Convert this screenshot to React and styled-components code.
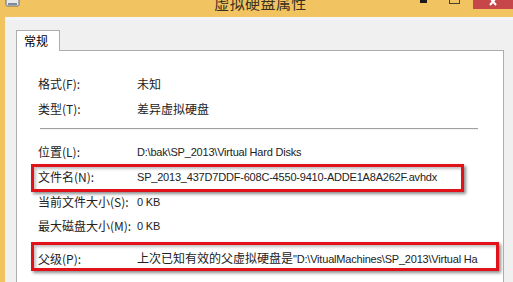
import React from "react";
import styled, { createGlobalStyle } from "styled-components";

const Global = createGlobalStyle`
  html, body { margin: 0; padding: 0; }
  body {
    width: 513px; height: 282px; overflow: hidden;
    background: #f0f0f0;
    font-family: "Liberation Sans", "Noto Sans CJK SC", sans-serif;
  }
`;

const Window = styled.div`
  width: 513px;
  height: 282px;
  display: flex;
  flex-direction: column;
  overflow: hidden;
  background: #f0c35f;
`;

const TitleBar = styled.div`
  position: relative;
  height: 17px;
  flex: none;
  display: flex;
  align-items: flex-end;
  justify-content: center;
  background: #f1c461;
  overflow: hidden;
`;

const Title = styled.div`
  font-family: "Noto Sans CJK SC", sans-serif;
  font-size: 15px;
  line-height: 15px;
  color: #3a3020;
  letter-spacing: 0.4px;
  margin-bottom: 7px;
  margin-left: 8px;
`;

const AppIcon = styled.svg`
  position: absolute;
  left: 5px;
  top: -6px;
`;

const Controls = styled.div`
  position: absolute;
  right: 0;
  top: 0;
  display: flex;
  align-items: flex-start;
`;

const CtlButton = styled.div`
  width: ${(p) => p.$w}px;
  height: 9px;
  display: flex;
  justify-content: center;
  background: ${(p) => (p.$close ? "#c7464a" : "transparent")};
`;

const MinGlyph = styled.div`
  width: 7px;
  height: 3px;
  background: #1a1a1a;
`;

const MaxGlyph = styled.div`
  width: 9px;
  height: 3px;
  border: 1px solid #4a4030;
  border-top: none;
`;

const Body = styled.div`
  flex: 1;
  display: flex;
  padding-left: 5px;
  min-height: 0;
`;

const Client = styled.div`
  flex: 1;
  display: flex;
  flex-direction: column;
  background: #f0f0f0;
  border-top: 3px solid #f3f5f9;
  padding: 10px 9px 0 11px;
  min-height: 0;
`;

const TabStrip = styled.div`
  display: flex;
  height: 20px;
  flex: none;
`;

const Tab = styled.div`
  width: 44px;
  height: 21px;
  box-sizing: border-box;
  border: 1px solid #adadad;
  border-bottom: none;
  background: #fff;
  font-family: "Noto Sans CJK SC", sans-serif;
  font-size: 12px;
  line-height: 12px;
  padding: 4px 0 0 7px;
  color: #000;
  position: relative;
  z-index: 1;
`;

const Panel = styled.div`
  flex: 1;
  background: #fff;
  border: 1px solid #adadad;
  border-bottom: none;
  padding: 21px 0 0 21px;
  min-height: 0;
  overflow: hidden;
`;

const Grid = styled.div`
  display: flex;
  flex-direction: column;
`;

const Row = styled.div`
  position: relative;
  display: grid;
  grid-template-columns: 99px 1fr;
  height: ${(p) => p.$h}px;
  align-items: ${(p) => (p.$bottom ? "end" : "center")};
  padding-bottom: ${(p) => (p.$bottom ? 4 : 0)}px;
  box-sizing: border-box;
`;

const Label = styled.div`
  font-family: "Noto Sans CJK SC", sans-serif;
  font-size: 12px;
  line-height: 14px;
  color: #222;
  white-space: nowrap;
`;

const Value = styled.div`
  font-family: "Liberation Sans", "Noto Sans CJK SC", sans-serif;
  font-size: 11px;
  line-height: 14px;
  letter-spacing: -0.2px;
  color: #222;
  white-space: nowrap;
`;

const CjkText = styled.span`
  font-family: "Noto Sans CJK SC", sans-serif;
  font-size: 12px;
  letter-spacing: 0;
`;

const Sep = styled.div`
  height: 1px;
  background: #a0a0a0;
  margin: 6px 0 10px 2px;
  width: 438px;
  border-bottom: 1px solid #f4f4f4;
`;

const Highlight = styled.div`
  position: absolute;
  left: ${(p) => p.$l}px;
  top: ${(p) => p.$t}px;
  width: ${(p) => p.$w}px;
  height: ${(p) => p.$h}px;
  box-sizing: border-box;
  border: 3px solid #e2121a;
  box-shadow: 2px 2px 3px rgba(0, 0, 0, 0.45), inset 2px 2px 3px rgba(0, 0, 0, 0.25);
  pointer-events: none;
`;

export default function App() {
  return (
    <>
      <Global />
      <Window>
        <TitleBar>
          <AppIcon width="15" height="15" viewBox="0 0 15 15">
            <rect x="1" y="1" width="13" height="11" rx="1.5" fill="#e8e8e8" stroke="#6a6a6a" />
            <rect x="3" y="9" width="9" height="2" fill="#7a8aa0" />
          </AppIcon>
          <Title>虚拟硬盘属性</Title>
          <Controls>
            <CtlButton $w={26}>
              <MinGlyph />
            </CtlButton>
            <CtlButton $w={37}>
              <MaxGlyph />
            </CtlButton>
            <CtlButton $w={40} $close>
              <svg width="10" height="9" viewBox="0 0 10 9">
                <path d="M2 -2 L8 5 M8 -2 L2 5" stroke="#fff" strokeWidth="2" />
              </svg>
            </CtlButton>
          </Controls>
        </TitleBar>
        <Body>
          <Client>
            <TabStrip>
              <Tab>常规</Tab>
            </TabStrip>
            <Panel>
              <Grid>
                <Row $h={24}>
                  <Label>格式(F):</Label>
                  <Label>未知</Label>
                </Row>
                <Row $h={26}>
                  <Label>类型(T):</Label>
                  <Label>差异虚拟硬盘</Label>
                </Row>
                <Sep />
                <Row $h={24}>
                  <Label>位置(L):</Label>
                  <Value>D:\bak\SP_2013\Virtual Hard Disks</Value>
                </Row>
                <Row $h={26}>
                  <Highlight $l={-7} $t={0} $w={433} $h={28} />
                  <Label>文件名(N):</Label>
                  <Value>SP_2013_437D7DDF-608C-4550-9410-ADDE1A8A262F.avhdx</Value>
                </Row>
                <Row $h={24}>
                  <Label>当前文件大小(S):</Label>
                  <Value>0 KB</Value>
                </Row>
                <Row $h={24}>
                  <Label>最大磁盘大小(M):</Label>
                  <Value>0 KB</Value>
                </Row>
                <Row $h={32} $bottom>
                  <Highlight $l={-7} $t={4} $w={468} $h={29} />
                  <Label>父级(P):</Label>
                  <Value>
                    <CjkText>上次已知有效的父虚拟硬盘是</CjkText>
                    "D:\VitualMachines\SP_2013\Virtual Ha
                  </Value>
                </Row>
              </Grid>
            </Panel>
          </Client>
        </Body>
      </Window>
    </>
  );
}
